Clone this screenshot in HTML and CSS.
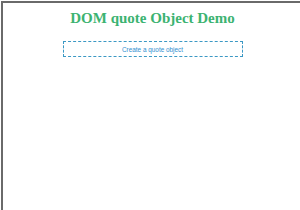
FILE: index.html
```html
<!DOCTYPE html>
<html>
<head>
<meta charset="utf-8">
<link rel="stylesheet" href="styles.css">
</head>
<body>
<div class="frame">
  <h1 class="title">DOM quote Object Demo</h1>
  <div class="actions">
    <button class="btn">Create a quote object</button>
  </div>
</div>
</body>
</html>
```

FILE: styles.css
```css
html, body {
  margin: 0;
  padding: 0;
  background: #fff;
  overflow: hidden;
  width: 300px;
  height: 210px;
}
.frame {
  margin: 1px 0 0 1px;
  width: 299px;
  height: 220px;
  border-top: 2px solid #6a6a6a;
  border-left: 2px solid #6a6a6a;
  box-sizing: content-box;
}
.title {
  margin: 7px 0 0;
  font-family: "Liberation Serif", serif;
  font-weight: bold;
  font-size: 15px;
  line-height: 17px;
  color: #3cb371;
  text-align: center;
}
.actions {
  display: flex;
  justify-content: center;
  margin-top: 14px;
}
.btn {
  width: 180px;
  height: 16px;
  padding: 0;
  background: #fff;
  border: 1px dashed #3b98c4;
  font-family: "Liberation Sans", Arial, sans-serif;
  font-size: 6.4px;
  color: #2f8fd0;
  cursor: pointer;
}
```
